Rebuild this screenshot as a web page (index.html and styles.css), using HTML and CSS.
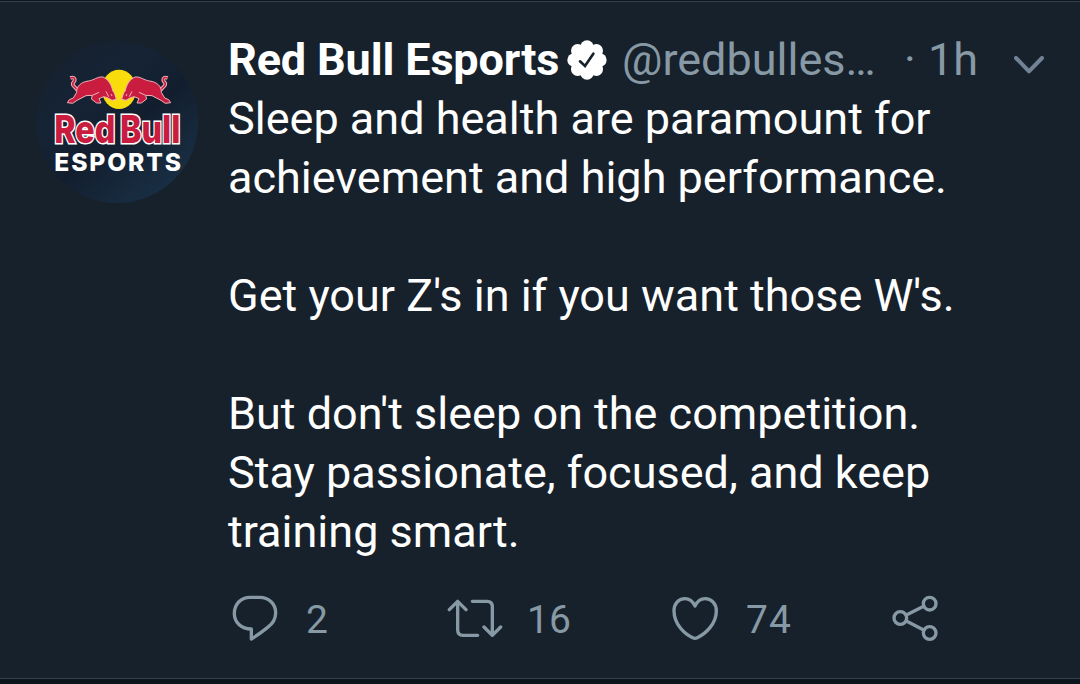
FILE: index.html
```html
<!DOCTYPE html>
<html lang="en">
<head>
    <meta charset="UTF-8">
    <meta name="viewport" content="width=device-width, initial-scale=1.0">
    <title>Red Bull Esports</title>
    <link rel="stylesheet" href="styles.css">
</head>
<body>
    <article class="tweet">
        <svg class="avatar" viewBox="18 33 486 486">
            <defs>
                <linearGradient id="night" x1="0" y1="0" x2="0.8" y2="1">
                    <stop offset="0" stop-color="#17212d"/>
                    <stop offset="0.4" stop-color="#152335"/>
                    <stop offset="0.6" stop-color="#121e2e"/>
                    <stop offset="1" stop-color="#1a3147"/>
                </linearGradient>
                <g id="bull">
                    <path class="tail" d="M121 144 C134 139 138 149 130 157 C122 165 137 171 143 182"/>
                    <path class="tail-inner" d="M121 144 C134 139 138 149 130 157 C122 165 137 171 143 182"/>
                    <path d="M140 187 C139 169 153 156 175 153 C192 151 202 139 219 141 C235 148 245 165 248 182 C255 189 256 200 259 208 L246 211 L232 203 L221 200 L207 206 L213 219 L200 219 L184 207 L187 196 L168 197 L141 211 L128 220 L112 218 L118 209 L130 204 Z"/>
                    <path class="bull-line" d="M187 196 L207 187 M228 184 L236 200 M243 192 L246 198"/>
                </g>
            </defs>
            <circle cx="261" cy="276" r="243" fill="url(#night)"/>
            <ellipse cx="267" cy="178" rx="52" ry="59" fill="#f9dc0c"/>
            <use href="#bull" class="bull"/>
            <use href="#bull" class="bull" transform="translate(534 0) scale(-1 1)"/>
            <text class="logo-name" x="73" y="340" textLength="378" lengthAdjust="spacingAndGlyphs">Red Bull</text>
            <text class="logo-sub" x="73" y="422" textLength="380">ESPORTS</text>
        </svg>

        <div class="content">
            <header class="tweet-header">
                <span class="name">Red Bull Esports</span>
                <svg class="verified" viewBox="0 0 120 120">
                    <g fill="#fff">
                        <circle cx="60" cy="60" r="44"/>
                        <circle cx="60" cy="21" r="20"/>
                        <circle cx="88" cy="32" r="20"/>
                        <circle cx="99" cy="60" r="20"/>
                        <circle cx="88" cy="88" r="20"/>
                        <circle cx="60" cy="99" r="20"/>
                        <circle cx="32" cy="88" r="20"/>
                        <circle cx="21" cy="60" r="20"/>
                        <circle cx="32" cy="32" r="20"/>
                    </g>
                    <path d="M39 64 L54 78 L79 41" fill="none" stroke="#17212b" stroke-width="8" stroke-linecap="round"/>
                </svg>
                <span class="handle">@redbulles…</span>
                <span class="dot">·</span>
                <span class="time">1h</span>
                <svg class="chevron" viewBox="0 0 90 54">
                    <path d="M6 6 L45 46 L84 6"/>
                </svg>
            </header>

            <div class="tweet-text">
                <p>Sleep and health are paramount for<br>achievement and high performance.</p>
                <p>Get your Z's in if you want those W's.</p>
                <p>But don't sleep on the competition.<br>Stay passionate, focused, and keep<br>training smart.</p>
            </div>

            <footer class="actions">
                <div class="action reply">
                    <svg class="icon" viewBox="36 45 138 138">
                        <path d="M94 147 C63 147 43 126 43 101 C43 71 64 52 90 52 H119 C147 52 167 72 167 98 C167 116 158 131 143 142 C128 154 112 166 94 177 Z"/>
                    </svg>
                    <span class="count">2</span>
                </div>
                <div class="action retweet">
                    <svg class="icon icon-wide" viewBox="681 45 168 138">
                        <path d="M688 89 L713 64 L738 89 M713 66 V150 Q713 166 729 166 H773 M757 64 H801 Q817 64 817 80 V164 M792 141 L817 166 L842 141"/>
                    </svg>
                    <span class="count">16</span>
                </div>
                <div class="action like">
                    <svg class="icon" viewBox="66 45 138 138">
                        <path d="M135 78 C127 62 117 56 105 56 C85 56 72 72 72 92 C72 132 103 161 128 173 Q135 177 142 173 C167 161 199 132 199 92 C199 72 185 56 165 56 C153 56 143 62 135 78 Z"/>
                    </svg>
                    <span class="count">74</span>
                </div>
                <div class="action">
                    <svg class="icon" viewBox="726 45 138 138">
                        <circle cx="751" cy="114" r="19"/>
                        <circle cx="839" cy="71" r="19"/>
                        <circle cx="839" cy="159" r="19"/>
                        <path d="M769 105 L821 79 M769 123 L821 150"/>
                    </svg>
                </div>
            </footer>
        </div>
    </article>
</body>
</html>
```
FILE: styles.css
```css
body {
    margin: 0;
    background-color: #0d141b;
    font-family: Roboto, sans-serif;
    font-size: 45px;
    line-height: 59px;
    color: #fff;
}

.tweet {
    box-sizing: border-box;
    height: 678px;
    margin-top: 1px;
    padding: 28px 36px 0;
    display: flex;
    gap: 30px;
    background-color: #17212b;
    border-top: 1px solid #35424e;
    border-bottom: 1px solid #35424e;
}

.avatar {
    width: 162px;
    height: 162px;
    margin-top: 11px;
    flex: none;
}

.bull {
    fill: #c91c3f;
    stroke: #eeb3bc;
    stroke-width: 3;
    stroke-linejoin: round;
}

.tail {
    fill: none;
    stroke-width: 11;
}

.tail-inner {
    fill: none;
    stroke: #c91c3f;
    stroke-width: 5;
}

.bull-line {
    fill: none;
    stroke-width: 3;
}

.logo-name {
    font-family: Inter, sans-serif;
    font-size: 114px;
    font-weight: 800;
    word-spacing: -8px;
    fill: #c91c3f;
    stroke: #fff;
    stroke-width: 9;
    paint-order: stroke;
}

.logo-sub {
    font-family: Inter, sans-serif;
    font-size: 74px;
    font-weight: 800;
    fill: #fff;
}

.content {
    flex: 1;
    min-width: 0;
}

.tweet-header {
    display: flex;
    align-items: center;
    height: 59px;
    white-space: nowrap;
}

.name {
    width: 331px;
    font-weight: bold;
    letter-spacing: -0.15px;
}

.verified {
    width: 40px;
    height: 40px;
    margin-left: 8px;
    flex: none;
}

.handle {
    width: 268px;
    margin-left: 15px;
}

.handle,
.dot,
.time {
    color: #8899a6;
}

.dot {
    width: 12px;
    margin-left: 14px;
}

.time {
    width: 52px;
    margin-left: 12px;
}

.chevron {
    width: 30px;
    height: 18px;
    margin: 10px 0 0 auto;
    fill: none;
    stroke: #718394;
    stroke-width: 12;
    stroke-linecap: round;
    stroke-linejoin: round;
}

.tweet-text p {
    margin: 0 0 59px;
    white-space: nowrap;
}

.tweet-text p:last-child {
    margin-bottom: 0;
}

.actions {
    display: flex;
    align-items: center;
    margin-top: 32px;
    padding-left: 4px;
    height: 52px;
    color: #8899a6;
    font-size: 39px;
}

.action {
    display: flex;
    align-items: center;
}

.reply {
    width: 215px;
}

.retweet {
    width: 225px;
}

.like {
    width: 220px;
}

.icon {
    width: 46px;
    height: 46px;
    margin-bottom: 2px;
    fill: none;
    stroke: #8899a6;
    stroke-width: 10;
    stroke-linecap: round;
    stroke-linejoin: round;
}

.icon-wide {
    width: 56px;
}

.count {
    margin-left: 28px;
    padding-top: 2px;
    letter-spacing: 1px;
}

.retweet .count {
    margin-left: 24px;
    letter-spacing: 0;
}
```
